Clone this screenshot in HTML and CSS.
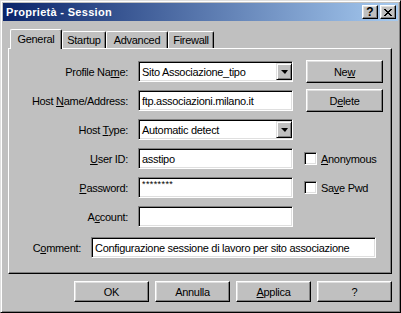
FILE: index.html
```html
<!DOCTYPE html>
<html>

<head>
    <meta charset="utf-8">
    <title>Proprietà - Session</title>
    <link rel="stylesheet" href="styles.css">
</head>

<body>
    <div class="window">
        <!-- Title bar -->
        <div class="titlebar">
            <span class="title">Proprietà - Session</span>
            <div class="title-buttons">
                <div class="tbtn">?</div>
                <div class="tbtn">
                    <svg width="8" height="7" viewBox="0 0 8 7" shape-rendering="crispEdges">
                        <path d="M0 0h2v1h-2zM6 0h2v1h-2zM1 1h2v1h-2zM5 1h2v1h-2zM2 2h4v1h-4zM3 3h2v1h-2zM2 4h4v1h-4zM1 5h2v1h-2zM5 5h2v1h-2zM0 6h2v1h-2zM6 6h2v1h-2z" fill="#000"/>
                    </svg>
                </div>
            </div>
        </div>

        <div class="content">
            <!-- Tabs -->
            <div class="tabs">
                <div class="tab active" style="width: 52px">General</div>
                <div class="tab" style="width: 44px">Startup</div>
                <div class="tab" style="width: 62px">Advanced</div>
                <div class="tab" style="width: 46px">Firewall</div>
            </div>

            <div class="panel">
                <div class="form">
                    <div class="lbl"><span>Profile Na<u>m</u>e:</span></div>
                    <div class="field combo">
                        <span class="value">Sito Associazione_tipo</span>
                        <span class="drop"><span class="arrow"></span></span>
                    </div>
                    <div class="side"><div class="btn side-btn"><span>Ne<u>w</u></span></div></div>

                    <div class="lbl"><span>Host <u>N</u>ame/Address:</span></div>
                    <div class="field"><span class="value">ftp.associazioni.milano.it</span></div>
                    <div class="side"><div class="btn side-btn"><span>D<u>e</u>lete</span></div></div>

                    <div class="lbl"><span>Host <u>T</u>ype:</span></div>
                    <div class="field combo">
                        <span class="value">Automatic detect</span>
                        <span class="drop"><span class="arrow"></span></span>
                    </div>
                    <div class="side"></div>

                    <div class="lbl"><span><u>U</u>ser ID:</span></div>
                    <div class="field"><span class="value">asstipo</span></div>
                    <div class="side check-row"><span class="check"></span><span><u>A</u>nonymous</span></div>

                    <div class="lbl"><span><u>P</u>assword:</span></div>
                    <div class="field"><span class="value stars">********</span></div>
                    <div class="side check-row"><span class="check"></span><span>Sa<u>v</u>e Pwd</span></div>

                    <div class="lbl"><span>A<u>c</u>count:</span></div>
                    <div class="field"></div>
                    <div class="side"></div>

                    <div class="comment-row">
                        <div class="lbl comment-lbl"><span>C<u>o</u>mment:</span></div>
                        <div class="field comment"><span class="value">Configurazione sessione di lavoro per sito associazione</span></div>
                    </div>
                </div>
            </div>

            <!-- Dialog buttons -->
            <div class="actions">
                <div class="btn action">OK</div>
                <div class="btn action">Annulla</div>
                <div class="btn action"><span><u>A</u>pplica</span></div>
                <div class="btn action">?</div>
            </div>
        </div>
    </div>
</body>

</html>
```

FILE: styles.css
```css
* {
    margin: 0;
    padding: 0;
    box-sizing: border-box;
}

body {
    font-family: 'Liberation Sans', Arial, sans-serif;
    font-size: 11px;
    letter-spacing: -0.3px;
    color: #000000;
    background: #c0c0c0;
}

u {
    text-decoration: underline;
    text-underline-offset: 1px;
}

.window {
    width: 401px;
    height: 313px;
    background: #c0c0c0;
    border: 1px solid;
    border-color: #dfdfdf #000000 #000000 #dfdfdf;
    box-shadow: inset 1px 1px #ffffff, inset -1px -1px #808080;
    padding: 2px;
}

/* Title bar */
.titlebar {
    height: 18px;
    display: flex;
    align-items: center;
    justify-content: space-between;
    padding: 0 2px 0 3px;
    background: linear-gradient(to right, #0a246a, #a6caf0);
}

.title {
    color: #ffffff;
    font-weight: bold;
    letter-spacing: 0.3px;
}

.title-buttons {
    display: flex;
    gap: 2px;
}

.tbtn {
    width: 16px;
    height: 14px;
    display: flex;
    align-items: center;
    justify-content: center;
    background: #c0c0c0;
    border: 1px solid;
    border-color: #ffffff #000000 #000000 #ffffff;
    box-shadow: inset -1px -1px #808080, inset 1px 1px #dfdfdf;
    font-weight: bold;
    font-size: 12px;
    letter-spacing: 0;
    line-height: 1;
}

/* Tabs */
.content {
    padding: 8px 0 0 5px;
}

.tabs {
    display: flex;
    align-items: flex-end;
    height: 19px;
    padding-left: 2px;
}

.tab {
    height: 17px;
    display: flex;
    align-items: center;
    justify-content: center;
    border: 1px solid;
    border-bottom: none;
    border-color: #ffffff #000000 #ffffff #ffffff;
    border-top-left-radius: 2px;
    border-top-right-radius: 2px;
    box-shadow: inset -1px 0 #808080;
    background: #c0c0c0;
}

.tab.active {
    height: 20px;
    margin-bottom: -1px;
    position: relative;
    z-index: 1;
    padding-bottom: 2px;
}

.panel {
    width: 384px;
    height: 226px;
    border: 1px solid;
    border-color: #ffffff #000000 #000000 #ffffff;
    box-shadow: inset -1px -1px #808080;
    padding-top: 12px;
}

/* Form */
.form {
    display: grid;
    grid-template-columns: 129px 155px 1fr;
    grid-auto-rows: 21px;
    row-gap: 8px;
}

.lbl {
    display: flex;
    align-items: center;
    justify-content: flex-end;
    padding-right: 10px;
    white-space: nowrap;
}

.field {
    height: 21px;
    background: #ffffff;
    border: 1px solid;
    border-color: #808080 #ffffff #ffffff #808080;
    box-shadow: inset 1px 1px #000000, inset -1px -1px #dfdfdf;
    display: flex;
    align-items: center;
    padding: 2px 2px 2px 3px;
    white-space: nowrap;
    overflow: hidden;
}

.value {
    flex: 1;
}

.stars {
    font-size: 9px;
    letter-spacing: 0.4px;
    align-self: flex-start;
    line-height: 9px;
}

.combo {
    padding-right: 0;
}

.drop {
    width: 16px;
    height: 17px;
    flex-shrink: 0;
    display: flex;
    align-items: center;
    justify-content: center;
    background: #c0c0c0;
    border: 1px solid;
    border-color: #dfdfdf #000000 #000000 #dfdfdf;
    box-shadow: inset 1px 1px #ffffff, inset -1px -1px #808080;
}

.arrow {
    width: 0;
    height: 0;
    border-top: 4px solid #000000;
    border-left: 4px solid transparent;
    border-right: 3px solid transparent;
}

.side {
    display: flex;
    align-items: center;
}

.btn {
    display: flex;
    align-items: center;
    justify-content: center;
    background: #c0c0c0;
    border: 1px solid;
    border-color: #ffffff #000000 #000000 #ffffff;
    box-shadow: inset -1px -1px #808080, inset 1px 1px #dfdfdf;
}

.side-btn {
    width: 77px;
    height: 23px;
    margin-left: 13px;
}

.check-row {
    padding-left: 11px;
    gap: 4px;
}

.check {
    width: 13px;
    height: 13px;
    background: #ffffff;
    border: 1px solid;
    border-color: #808080 #ffffff #ffffff #808080;
    box-shadow: inset 1px 1px #000000, inset -1px -1px #dfdfdf;
}

.comment-row {
    grid-column: 1 / -1;
    display: flex;
    align-items: center;
    margin-top: 4px;
}

.comment-lbl {
    width: 82px;
    height: 21px;
}

.comment {
    width: 285px;
}

/* Dialog buttons */
.actions {
    width: 384px;
    display: flex;
    justify-content: flex-end;
    gap: 6px;
    margin-top: 7px;
}

.action {
    width: 75px;
    height: 21px;
}
```
